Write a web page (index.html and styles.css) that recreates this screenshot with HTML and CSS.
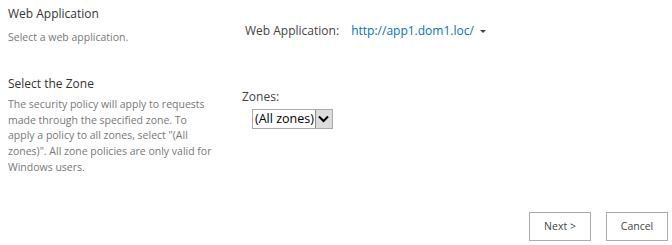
FILE: index.html
```html
<!DOCTYPE html>
<html lang="en">
<head>
    <meta charset="UTF-8">
    <title>Web Application Policy</title>
    <link rel="stylesheet" href="styles.css">
</head>
<body>
    <div class="section section-first">
        <div class="section-info">
            <h3>Web Application</h3>
            <p>Select a web application.</p>
        </div>
        <div class="section-field field-webapp">
            <span class="field-label">Web Application:</span>
            <a href="#" class="webapp-link">http://app1.dom1.loc/</a>
            <span class="caret"></span>
        </div>
    </div>

    <div class="section">
        <div class="section-info">
            <h3>Select the Zone</h3>
            <p>The security policy will apply to requests made through the specified zone. To apply a policy to all zones, select "(All zones)". All zone policies are only valid for Windows users.</p>
        </div>
        <div class="section-field field-zone">
            <div class="zone-label">Zones:</div>
            <div class="select">
                <span class="select-value">(All zones)</span>
                <span class="select-button">
                    <svg width="11" height="8" viewBox="0 0 11 8"><path d="M1 1.5 L5.5 6 L10 1.5" fill="none" stroke="#000" stroke-width="2"/></svg>
                </span>
            </div>
        </div>
    </div>

    <div class="buttons">
        <button>Next &gt;</button>
        <button>Cancel</button>
    </div>
</body>
</html>
```

FILE: styles.css
```css
body {
  margin: 0;
  padding: 0;
  font-family: "Open Sans", "Noto Sans", sans-serif;
  color: #444;
  background-color: #fff;
}

.section {
  display: flex;
  padding: 0 0 0 8px;
}

.section-first {
  padding-top: 4px;
  height: 70px;
}

.section-info {
  width: 222px;
  flex-shrink: 0;
}

.section-info h3 {
  margin: 0;
  font-size: 12px;
  font-weight: normal;
  line-height: 20px;
  color: #333;
}

.section-info p {
  margin: 3px 0 0 0;
  max-width: 206px;
  font-size: 10.5px;
  line-height: 15.7px;
  color: #777;
}

.section-first .section-info p {
  margin-top: 6px;
}

.section-field {
  padding-left: 15px;
}

.field-webapp {
  padding-top: 18px;
  font-size: 12px;
}

.field-label {
  color: #444;
}

.webapp-link {
  margin-left: 9px;
  color: #0072c6;
  text-decoration: none;
}

.caret {
  display: inline-block;
  margin-left: 3px;
  width: 0;
  height: 0;
  border-left: 3px solid transparent;
  border-right: 3px solid transparent;
  border-top: 3px solid #444;
  vertical-align: middle;
}

.field-zone {
  padding-top: 14px;
  padding-left: 12px;
}

.zone-label {
  font-size: 12px;
  line-height: 18px;
}

.select {
  display: inline-flex;
  margin: 3px 0 0 10px;
  border: 1px solid #ababab;
  height: 18px;
  font-size: 12.5px;
  color: #000;
  background: #fff;
}

.select-value {
  padding: 0 1px 0 2px;
  line-height: 18px;
}

.select-button {
  display: flex;
  align-items: center;
  justify-content: center;
  width: 16px;
  background: #dcdcdc;
  border-left: 1px solid #8a8a8a;
}

.buttons {
  display: flex;
  justify-content: flex-end;
  gap: 15px;
  padding: 36px 4px 0 0;
}

.buttons button {
  width: 62px;
  height: 29px;
  border: 1px solid #ababab;
  background: #fff;
  font-family: "Open Sans", "Noto Sans", sans-serif;
  font-size: 10.5px;
  color: #444;
  padding: 0;
}
```
